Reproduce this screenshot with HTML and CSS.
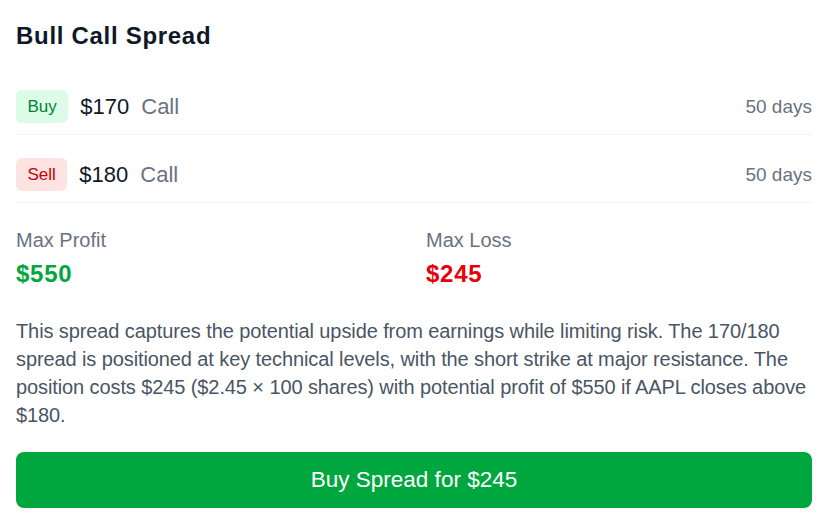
FILE: index.html
```html
<!DOCTYPE html>
<html>
<head>
<meta charset="utf-8">
<link rel="stylesheet" href="styles.css">
</head>
<body>
<div class="card">
  <h2 class="title">Bull Call Spread</h2>
  <div class="legs">
    <div class="leg">
      <div class="leg-left">
        <span class="badge badge-buy">Buy</span>
        <span class="strike">$170</span>
        <span class="type">Call</span>
      </div>
      <span class="expiry">50 days</span>
    </div>
    <div class="leg">
      <div class="leg-left">
        <span class="badge badge-sell">Sell</span>
        <span class="strike">$180</span>
        <span class="type">Call</span>
      </div>
      <span class="expiry">50 days</span>
    </div>
  </div>
  <div class="stats">
    <div class="stat">
      <div class="stat-label">Max Profit</div>
      <div class="stat-value profit">$550</div>
    </div>
    <div class="stat">
      <div class="stat-label">Max Loss</div>
      <div class="stat-value loss">$245</div>
    </div>
  </div>
  <p class="desc">This spread captures the potential upside from earnings while limiting risk. The 170/180 spread is positioned at key technical levels, with the short strike at major resistance. The position costs $245 ($2.45 × 100 shares) with potential profit of $550 if AAPL closes above $180.</p>
  <button class="cta">Buy Spread for $245</button>
</div>
</body>
</html>
```

FILE: styles.css
```css
* { box-sizing: border-box; }
html, body { margin: 0; padding: 0; background: #ffffff; }
body { font-family: "Liberation Sans", Arial, sans-serif; }
.card { padding: 20px 16px 14px 16px; }
.title { margin: 0 0 26px 0; font-size: 24px; line-height: 32px; font-weight: 700; letter-spacing: 0.7px; color: #101828; }
.legs { display: flex; flex-direction: column; gap: 11px; }
.leg { display: flex; align-items: center; justify-content: space-between; padding: 12px 0 11px 0; border-bottom: 1px solid #f3f4f6; }
.leg-left { display: flex; align-items: center; gap: 12px; }
.badge { display: inline-block; padding: 6px 11.5px; border-radius: 6px; font-size: 17px; line-height: 21px; }
.badge-buy { background: #dcfce7; color: #008236; }
.badge-sell { background: #ffe2e2; color: #c10007; }
.strike { font-size: 22px; line-height: 28px; color: #101828; }
.type { font-size: 22px; line-height: 28px; color: #6a7282; }
.expiry { font-size: 19px; line-height: 28px; color: #6a7282; }
.stats { display: grid; grid-template-columns: 1fr 1fr; gap: 24px; margin-top: 23px; }
.stat-label { font-size: 20px; line-height: 28px; color: #6a7282; }
.stat-value { font-size: 24px; line-height: 32px; font-weight: 700; letter-spacing: 0.75px; margin-top: 4px; }
.profit { color: #00a63e; }
.loss { color: #e7000b; }
.desc { margin: 27px 0 0 0; font-size: 20px; line-height: 28px; letter-spacing: -0.1px; color: #4a5565; }
.cta { display: block; width: 100%; margin-top: 23px; height: 56px; border: none; border-radius: 8px; background: #00a63e; color: #ffffff; font-family: "Liberation Sans", Arial, sans-serif; font-size: 22.5px; }
```
